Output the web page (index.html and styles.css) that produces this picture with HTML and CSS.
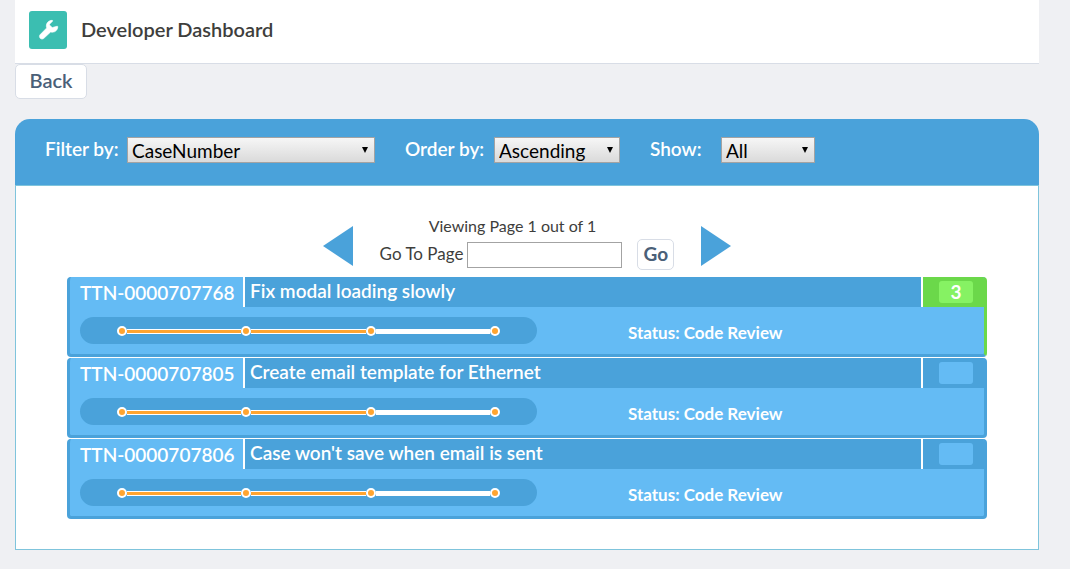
FILE: index.html
```html
<!DOCTYPE html>
<html lang="en">
<head>
<meta charset="utf-8">
<title>Developer Dashboard</title>
<link rel="stylesheet" href="styles.css">
</head>
<body>
<header class="page-header">
  <span class="page-icon">
    <svg viewBox="0 0 38 38" aria-hidden="true">
      <path d="M27.9 15.3c.4-.3.9 0 .9.5 0 3-2.400 5.400-5.400 5.400-.6 0-1.200-.1-1.700-.3l-6.800 6.400c-1 1-2.700 1-3.700 0s-1-2.700 0-3.700l6.500-6.700c-.2-.6-.4-1.200-.4-1.900 0-3.200 2.600-5.700 5.800-5.700.5 0 .7.500.4.9l-2.700 2.700c-.4.400-.4.900 0 1.300l2.100 2.100c.4.400.9.400 1.300 0z"/>
    </svg>
  </span>
  <h1 class="page-title">Developer Dashboard</h1>
</header>
<button class="button button-back" type="button">Back</button>
<main class="panel">
  <form class="filters">
    <label class="filter-label" for="filter">Filter by:</label>
    <select class="filter-select select-field" id="filter"><option>CaseNumber</option></select>
    <label class="filter-label" for="order">Order by:</label>
    <select class="filter-select select-order" id="order"><option>Ascending</option></select>
    <label class="filter-label label-show" for="show">Show:</label>
    <select class="filter-select select-show" id="show"><option>All</option></select>
  </form>
  <div class="panel-body">
    <nav class="pager" aria-label="Pages">
      <button class="arrow" type="button" aria-label="Previous page"><svg viewBox="0 0 30 40"><path d="M0 20 30 0v40z"/></svg></button>
      <form class="pager-form">
        <p class="pager-status">Viewing Page 1 out of 1</p>
        <div class="pager-row">
          <label class="page-label" for="page">Go To Page</label>
          <input class="page-input" id="page" type="text">
          <button class="button button-go" type="button">Go</button>
        </div>
      </form>
      <button class="arrow" type="button" aria-label="Next page"><svg viewBox="0 0 30 40"><path d="M0 0 30 20 0 40z"/></svg></button>
    </nav>
    <section class="cases">
      <article class="case case-flagged">
        <div class="case-head">
          <span class="case-id">TTN-0000707768</span>
          <h2 class="case-title">Fix modal loading slowly</h2>
          <span class="case-count"><span class="badge">3</span></span>
        </div>
        <div class="case-body">
          <div class="track"><i class="dot"></i><i class="step"></i><i class="dot"></i><i class="step"></i><i class="dot"></i><i class="step step-todo"></i><i class="dot"></i></div>
          <p class="case-status">Status: Code Review</p>
        </div>
      </article>
      <article class="case">
        <div class="case-head">
          <span class="case-id">TTN-0000707805</span>
          <h2 class="case-title">Create email template for Ethernet</h2>
          <span class="case-count"><span class="badge"></span></span>
        </div>
        <div class="case-body">
          <div class="track"><i class="dot"></i><i class="step"></i><i class="dot"></i><i class="step"></i><i class="dot"></i><i class="step step-todo"></i><i class="dot"></i></div>
          <p class="case-status">Status: Code Review</p>
        </div>
      </article>
      <article class="case">
        <div class="case-head">
          <span class="case-id">TTN-0000707806</span>
          <h2 class="case-title">Case won't save when email is sent</h2>
          <span class="case-count"><span class="badge"></span></span>
        </div>
        <div class="case-body">
          <div class="track"><i class="dot"></i><i class="step"></i><i class="dot"></i><i class="step"></i><i class="dot"></i><i class="step step-todo"></i><i class="dot"></i></div>
          <p class="case-status">Status: Code Review</p>
        </div>
      </article>
    </section>
  </div>
</main>
</body>
</html>
```
FILE: styles.css
```css
* { box-sizing: border-box; }

body {
  margin: 0;
  padding: 0 31px 19px 15px;
  background: #eff0f3;
  color: #3e3e3c;
  font-family: Lato, "Open Sans", sans-serif;
  font-size: 16px;
}

h1, h2, p { margin: 0; }

button, input, select { font-family: inherit; }

.page-header {
  display: flex;
  align-items: center;
  gap: 14px;
  height: 64px;
  padding: 0 14px 4px;
  background: #fff;
  border-bottom: 1px solid #d8dde6;
}

.page-icon {
  width: 38px;
  height: 38px;
  border-radius: 3px;
  background: #3bbeb1;
}

.page-icon svg {
  display: block;
  fill: #fff;
  stroke: #fff;
  stroke-width: 0.6;
}

.page-title {
  padding-bottom: 2px;
  font-size: 20px;
  line-height: 24px;
  font-weight: 600;
}

.button {
  border: 1px solid #d8dde6;
  border-radius: 5px;
  background: #fff;
  color: #4a6078;
  font-size: 19px;
}

.button-back {
  display: block;
  width: 72px;
  height: 35px;
  padding: 0 0 3px;
  font-size: 20px;
  font-weight: 600;
}

.panel { margin-top: 20px; }

.filters {
  display: flex;
  align-items: center;
  height: 66px;
  padding: 0 30px 4px;
  border-radius: 15px 15px 0 0;
  background: #4aa2da;
}

.filter-label {
  min-width: 82px;
  padding-bottom: 2px;
  color: #fff;
  font-size: 19px;
  line-height: 24px;
  font-weight: 600;
}

.filter-select + .filter-label { margin-left: 30px; }

.filter-select {
  appearance: none;
  height: 26px;
  padding: 0 4px;
  border: 1px solid #a3a3a3;
  border-radius: 0;
  background: url("data:image/svg+xml,%3Csvg xmlns='http://www.w3.org/2000/svg' width='6' height='6'%3E%3Cpath d='M0 0h6L3 6z'/%3E%3C/svg%3E") right 6px center no-repeat, linear-gradient(#f6f6f6, #dadada);
  color: #000;
  font-size: 19px;
}

.select-field { width: 248px; }
.select-order { width: 126px; margin-left: 7px; }
.select-show { width: 94px; }
.filter-select + .label-show { min-width: 71px; }

.panel-body {
  padding: 30px 51px;
  border: 1px solid #7fc4dc;
  background: #fff;
}

.pager {
  display: flex;
  justify-content: center;
  align-items: flex-end;
  gap: 27px;
  margin-bottom: 7px;
}

.arrow {
  width: 30px;
  height: 44px;
  padding: 0 0 4px;
  border: 0;
  background: none;
}

.arrow svg { display: block; fill: #4aa2da; }

.pager-status {
  padding-right: 29px;
  line-height: 19px;
  text-align: center;
}

.pager-row {
  display: flex;
  align-items: center;
  gap: 4px;
  margin-top: 4px;
}

.page-label {
  padding-bottom: 2px;
  font-size: 17px;
  line-height: 20px;
}

.page-input {
  width: 155px;
  height: 26px;
  border: 1px solid #a3a3a3;
  background: #fff;
  font-size: 16px;
}

.button-go {
  width: 37px;
  height: 31px;
  margin-left: 11px;
  padding: 0 0 2px;
  font-weight: 700;
}

.cases {
  display: grid;
  gap: 1px;
}

.case {
  overflow: hidden;
  border: 3px solid #4aa2da;
  border-top: 0;
  border-radius: 4px;
  background: linear-gradient(#64bbf4, #64bbf4) padding-box, #4aa2da;
  color: #fff;
  font-size: 19px;
}

.case-head {
  display: flex;
  height: 30px;
  line-height: 30px;
}

.case-id {
  width: 173px;
  padding: 1px 0 0 10px;
  font-weight: 600;
}

.case-title {
  flex: 1;
  padding-left: 5px;
  border: solid #fff;
  border-width: 0 2px;
  background: #4aa2da;
  font-size: 19px;
  line-height: 28px;
  font-weight: 600;
}

.case-count {
  width: 61px;
  padding: 4px 11px 4px 16px;
  background: #4aa2da;
}

.badge {
  display: block;
  height: 22px;
  border-radius: 3px;
  background: #64bbf4;
  line-height: 21px;
  text-align: center;
  font-weight: 700;
}

.case-flagged { border-right-color: #6bd84a; }
.case-flagged .case-count { background: #6bd84a; }
.case-flagged .badge { background: #86f263; }

.case-body {
  display: flex;
  align-items: center;
  gap: 91px;
  padding: 10px;
}

.track {
  display: flex;
  align-items: center;
  flex: none;
  width: calc(50% + 10px);
  height: 27px;
  padding: 1px 37px 0;
  border-radius: 14px;
  background: #4aa2da;
}

.dot {
  width: 10px;
  height: 10px;
  border: 2px solid #fff;
  border-radius: 50%;
  background: #ffa531;
}

.step {
  flex: 1;
  height: 5px;
  border: solid #fff;
  border-width: 1px 0;
  background: #ffa531;
}

.step-todo { background: #fff; }

.case-status {
  padding-top: 4px;
  font-size: 17px;
  line-height: 20px;
  font-weight: 700;
}
```
